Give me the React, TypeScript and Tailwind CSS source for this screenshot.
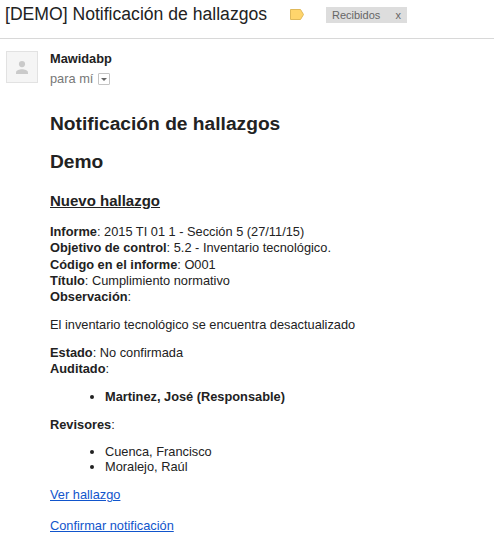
import React from 'react';

function Field({ label, value }: { label: string; value?: string }) {
  return (
    <div>
      <b>{label}</b>:{value ? ` ${value}` : ''}
    </div>
  );
}

export default function App() {
  return (
    <div className="h-[550px] w-[494px] overflow-hidden bg-white font-['Liberation_Sans',Arial,sans-serif] text-[12.8px] leading-[16.25px] text-[#222]">
      <header className="flex h-[39px] items-start border-b border-[#d8d8d8] pl-[5px]">
        <h1 className="w-[285px] shrink-0 pt-[3px] text-[17.6px] leading-[22px] whitespace-nowrap">[DEMO] Notificación de hallazgos</h1>
        <svg className="mt-[9px] shrink-0" width="14" height="11" viewBox="0 0 14 11">
          <path d="M.5.5h10L13.500 5.500l-3 5H.5z" fill="#ffd56c" stroke="#e0b95a" />
        </svg>
        <div className="mt-[7px] ml-[22px] flex h-[16px] w-[81px] shrink-0 items-center justify-between bg-[#ddd] px-[6px] text-[11px] text-[#666]">
          <span>Recibidos</span>
          <span>x</span>
        </div>
      </header>
      <section className="flex pt-[12px] pl-[6px]">
        <div className="flex size-[32px] items-center justify-center border border-[#e2e2e2] bg-[#f5f5f5]">
          <svg width="12" height="13" viewBox="0 0 12 13" fill="#cacaca">
            <circle cx="6" cy="3.100" r="3.100" />
            <path d="M0 13v-1.500c0-2 3.500-3.200 6-3.200s6 1.200 6 3.200V13z" />
          </svg>
        </div>
        <div className="ml-[12px]">
          <div className="font-bold">Mawidabp</div>
          <div className="mt-[4px] flex items-center text-[#777]">
            para mí
            <span className="ml-[5px] flex size-[12px] items-center justify-center rounded-[1px] border border-[#c4c4c4]">
              <svg width="6" height="3" viewBox="0 0 6 3"><path d="M0 0h6L3 3z" fill="#666" /></svg>
            </span>
          </div>
        </div>
      </section>
      <main className="pt-[25px] pl-[50px]">
        <h2 className="text-[19.2px] leading-[22px] font-bold">Notificación de hallazgos</h2>
        <h2 className="mt-[16px] text-[19.2px] leading-[22px] font-bold">Demo</h2>
        <h3 className="mt-[19px] text-[15px] leading-[18px] font-bold underline">Nuevo hallazgo</h3>
        <div className="mt-[14.5px]">
          <Field label="Informe" value="2015 TI 01 1 - Sección 5 (27/11/15)" />
          <Field label="Objetivo de control" value="5.2 - Inventario tecnológico." />
          <Field label="Código en el informe" value="O001" />
          <Field label="Título" value="Cumplimiento normativo" />
          <Field label="Observación" />
        </div>
        <p className="mt-[11.5px]">El inventario tecnológico se encuentra desactualizado</p>
        <div className="mt-[12px]">
          <Field label="Estado" value="No confirmada" />
          <Field label="Auditado" />
        </div>
        <ul className="mt-[11px] list-disc pl-[55px] leading-[15px] font-bold">
          <li>Martinez, José (Responsable)</li>
        </ul>
        <div className="mt-[13px]"><Field label="Revisores" /></div>
        <ul className="mt-[11px] list-disc pl-[55px] leading-[15px]">
          <li>Cuenca, Francisco</li>
          <li>Moralejo, Raúl</li>
        </ul>
        <p className="mt-[13px]"><a className="text-[#15c] underline">Ver hallazgo</a></p>
        <p className="mt-[15px]"><a className="text-[#15c] underline">Confirmar notificación</a></p>
      </main>
    </div>
  );
}
